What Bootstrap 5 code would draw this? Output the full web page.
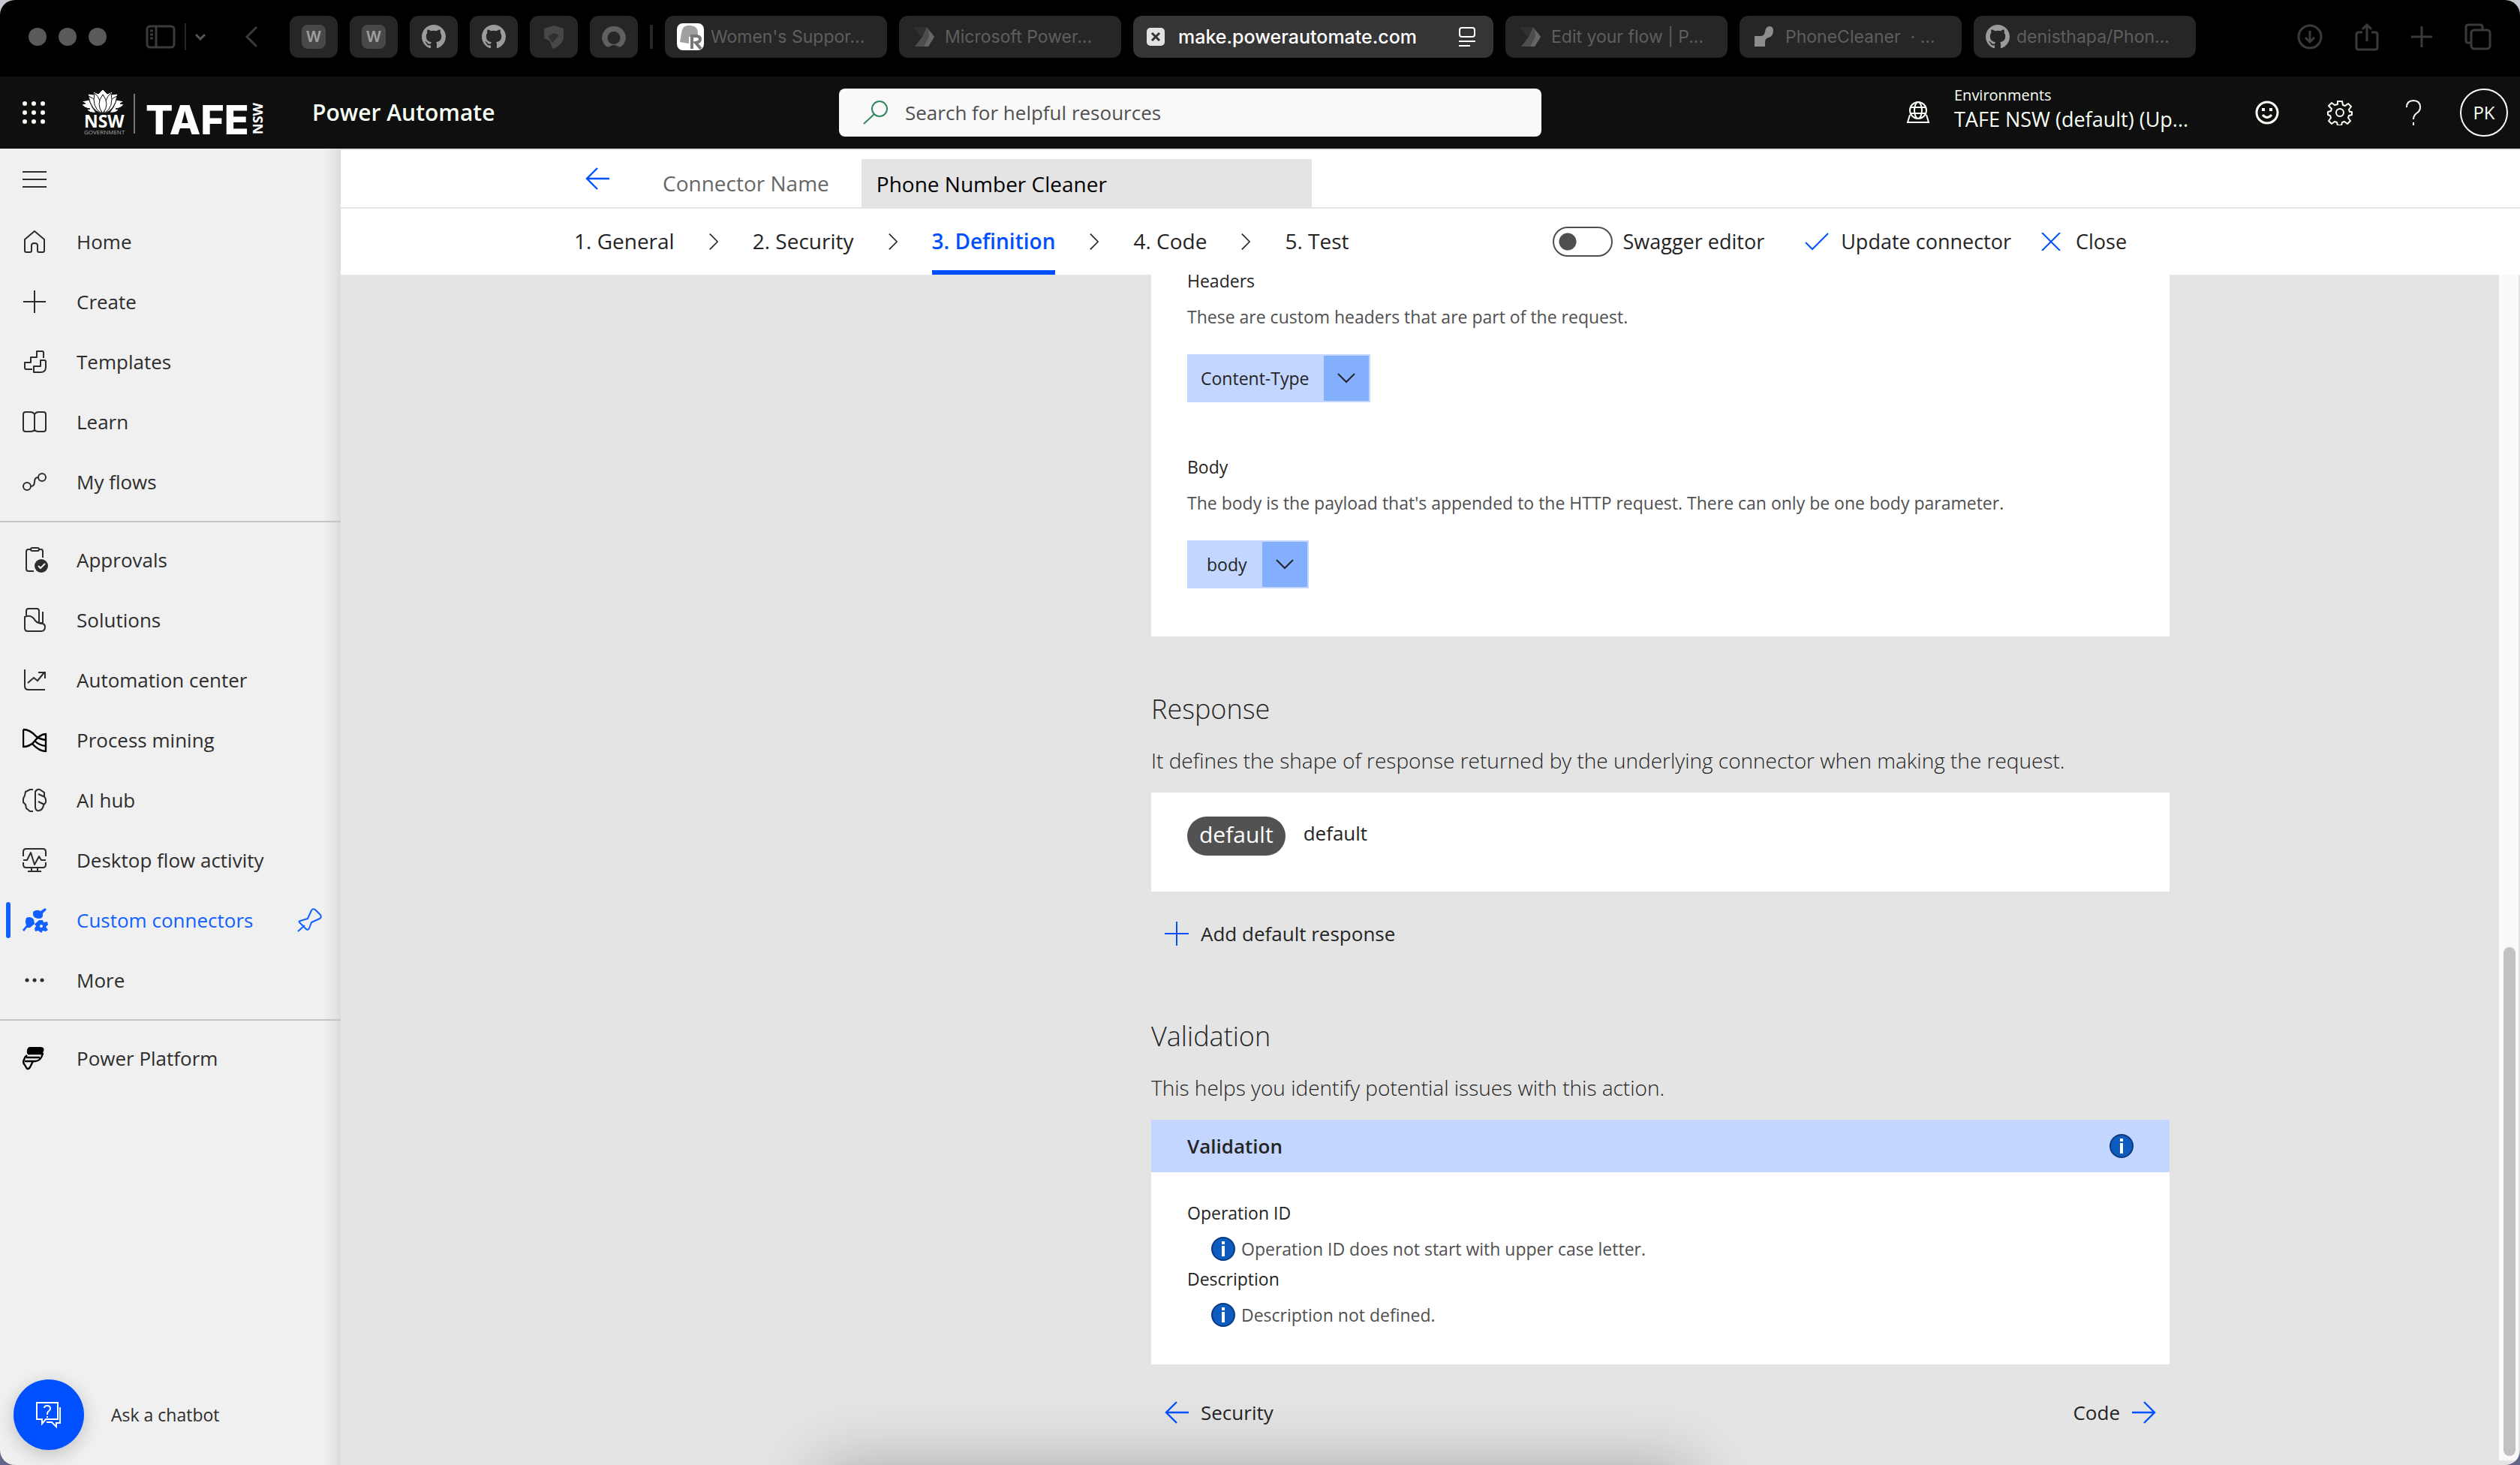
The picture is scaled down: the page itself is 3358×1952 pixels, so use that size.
<!DOCTYPE html>
<html lang="en">
<head>
<meta charset="utf-8">
<meta name="viewport" content="width=device-width, initial-scale=1">
<title>Power Automate - Custom connector</title>
<link href="https://cdn.jsdelivr.net/npm/bootstrap@5.3.0/dist/css/bootstrap.min.css" rel="stylesheet">
<style>
  :root { --blue: #0050ff; --ink: #242424; --soft: #505050; --canvas: #e4e4e4; }
  body { font-family: "Open Sans", "Noto Sans", sans-serif; font-size: 26px; line-height: 40px; color: var(--ink);
         background: linear-gradient(#c6c8d2, #62678a); overflow: hidden; }
  svg { fill: none; stroke: currentColor; stroke-width: 2; flex: none; display: block; }
  svg.solid { stroke: none; fill: currentColor; }
  svg.thick { stroke-width: 3; }
  button { color: inherit; }
  .plain-btn { background: none; border: 0; padding: 0; color: inherit; }
  .window { border-radius: 20px; overflow: hidden; position: relative; }

  /* browser bar */
  .browser-bar { height: 102px; background: #000; color: #3a3a3a; font-family: Inter, sans-serif; font-size: 23px; padding: 0 38px 4px 38px; }
  .dot { width: 24px; height: 24px; border-radius: 50%; background: #5a5a5a; }
  .vline { width: 2px; height: 36px; background: #262626; }
  .vline.wide { width: 4px; height: 32px; }
  .bar-left { width: 348px; }
  .bar-left .panel { margin-left: 52px; }
  .bar-left .vline { margin: 0 12px; }
  .bar-left .prev { margin-left: 52px; }
  .bar-right { gap: 43px; }
  .pin { width: 64px; height: 56px; border-radius: 12px; background: #262626; color: #9b9b9b; display: flex; align-items: center; justify-content: center; }
  .pin b { background: #484848; color: #a0a0a0; width: 32px; height: 32px; line-height: 32px; border-radius: 8px; font-size: 20px; font-weight: 600; text-align: center; }
  .tab { width: 296px; height: 56px; border-radius: 12px; background: #262626; color: #5e5e5e; padding: 0 16px; gap: 9px; }
  .tab.current { width: 480px; background: #353535; color: #fff; font-weight: 500; font-size: 25px; padding: 0 24px 0 18px; gap: 18px; }

  /* product bar */
  .product-bar { height: 96px; background: #0f0f0f; color: #f8fff5; padding: 0 16px 0 30px; }
  .product-name { font-size: 30px; font-weight: 600; color: inherit; margin-left: 62px; }
  .side-block { flex: 0 0 1088px; }
  .logo { margin-left: 48px; }
  .search { width: 936px; height: 64px; background: #f9f9f9; border-radius: 8px; color: #34875f; padding-left: 32px; gap: 20px; }
  .search input { border: 0; background: none; outline: 0; flex: 1; font-size: 26px; color: #424242; }
  .search input::placeholder { color: #505050; opacity: 1; }
  .env { gap: 32px; }
  .env-text { width: 320px; padding-bottom: 10px; margin-right: 81px; }
  .env-label { font-size: 20px; line-height: 28px; }
  .env-value { font-size: 27px; line-height: 36px; white-space: nowrap; }
  .tools { gap: 64px; }
  .tools .help { padding: 0 7px; }
  .who { width: 64px; height: 64px; border: 2px solid; border-radius: 50%; font-size: 24px; margin-left: 45px; }

  /* left navigation */
  .side-nav { flex: 0 0 454px; background: linear-gradient(to left, #dcdcdc, #f0f0f0 22px); color: #2d2d2d; padding-top: 14px; }
  .side-link { height: 80px; padding-left: 30px; gap: 38px; color: inherit; text-decoration: none; position: relative; }
  .side-link svg { width: 34px; height: 34px; }
  .side-link.menu-toggle { height: 70px; width: 100%; }
  .side-link.chosen { color: #1160ff; }
  .side-link.chosen::before { content: ""; position: absolute; left: 8px; top: 16px; width: 6px; height: 48px; border-radius: 3px; background: currentColor; }
  .side-rule { height: 2px; background: #c4c4c4; margin: 12px 0 10px; }
  .chat { padding: 0 0 20px 18px; gap: 36px; font-size: 23px; }
  .chat button { width: 94px; height: 94px; border-radius: 50%; border: 0; background: var(--blue); color: #fff; box-shadow: 0 6px 24px rgba(0,0,0,.2); }

  /* connector bars */
  .name-bar { height: 80px; background: #fff; border-top: 2px solid var(--canvas); border-bottom: 2px solid var(--canvas); padding-left: 326px; }
  .name-bar label { color: #666; font-size: 28px; margin: 0 43px 0 71px; padding-top: 12px; }
  .name-bar input { width: 600px; height: 64px; border: 0; background: var(--canvas); padding: 2px 20px 0; font-size: 28px; color: #000; }
  .step-bar { height: 88px; background: #fff; padding-left: 311px; }
  .steps { gap: 46px; font-size: 28px; }
  .steps a { color: inherit; text-decoration: none; line-height: 86px; height: 88px; }
  .steps a.here { color: var(--blue); font-weight: 600; border-bottom: 6px solid var(--blue); }
  .actions { margin-left: 271px; font-size: 27px; }
  .actions button { margin-left: 54px; }
  .actions button:last-child { margin-left: 40px; gap: 20px; }
  .toggle { appearance: none; width: 80px; height: 40px; border: 2px solid #504f4e; border-radius: 20px; background: radial-gradient(circle at 18px 50%, #504f4e 11px, transparent 12px); margin: 0 14px 0 0; }
  .accent { color: var(--blue); }

  /* definition pane */
  .pane { background: var(--canvas); overflow: hidden; position: relative; }
  .column { width: 47%; max-width: 1357px; margin-left: 1080px; }
  .sheet { background: #fff; padding: 0 48px; }
  .field-name, .field-note { font-size: 23px; line-height: 32px; margin: 0; }
  .field-note { color: var(--soft); margin-top: 16px; }
  .first-sheet { padding-bottom: 64px; }
  .first-sheet .field-name:first-child { margin-top: -8px; }
  .first-sheet .next-field { margin-top: 70px; }
  .split { margin-top: 34px; height: 64px; background: #c2d6ff; border: 2px solid #c2d6ff; border-radius: 0; font-size: 23px; width: max-content; }
  .split .plain-btn { padding: 0 20px 0 16px; }
  .split .opener { width: 60px; background: #84afff; padding: 0; }
  .section-title { font-size: 36px; font-weight: 300; line-height: 48px; margin: 73px 0 24px; }
  .section-title.later { margin-top: 93px; }
  .section-note { font-weight: 300; font-size: 28px; margin: 0 0 23px; }
  .response-sheet { padding-top: 32px; height: 132px; }
  .response-sheet .desc { padding-top: 2px; }
  .pill { background: #525252; color: #fff; border-radius: 26px; height: 52px; line-height: 48px; padding: 0 16px; font-size: 30px; }
  .add { margin: 36px 0 0 18px; }
  .sheet-head { background: #c2d6ff; height: 70px; padding: 0 48px; font-weight: 600; font-size: 26px; }
  .issues { padding-top: 38px; padding-bottom: 50px; }
  .issue { font-size: 23px; line-height: 32px; color: var(--soft); padding-left: 32px; gap: 8px; margin: 16px 0 8px; }
  .pager { margin: 44px 18px 0; }
  .track { position: absolute; right: 2px; top: 0; bottom: 6px; width: 26px; background: #fafafa; }
  .thumb { position: absolute; left: 6px; right: 4px; top: 56.7%; bottom: 6px; border-radius: 8px; background: #c1c1c1; }
  .dock-shade { position: absolute; left: 22%; width: 40%; height: 120px; bottom: -122px; box-shadow: 0 0 90px rgba(0,0,0,.27); }
</style>
</head>
<body>
<svg width="0" height="0" class="position-absolute">
  <symbol id="octocat" viewBox="0 0 16 16"><path fill="currentColor" stroke="none" d="M8 0C3.58 0 0 3.58 0 8c0 3.54 2.29 6.53 5.47 7.59.4.07.55-.17.55-.38 0-.19-.01-.82-.01-1.49-2.01.37-2.53-.49-2.69-.94-.09-.23-.48-.94-.82-1.13-.28-.15-.68-.52-.01-.53.63-.01 1.08.58 1.23.82.72 1.21 1.87.87 2.33.66.07-.52.28-.87.51-1.07-1.78-.2-3.64-.89-3.64-3.95 0-.87.31-1.59.82-2.15-.08-.2-.36-1.02.08-2.12 0 0 .67-.21 2.2.82.64-.18 1.32-.27 2-.27s1.36.09 2 .27c1.53-1.04 2.2-.82 2.2-.82.44 1.1.16 1.92.08 2.12.51.56.82 1.27.82 2.15 0 3.07-1.87 3.75-3.65 3.95.29.25.54.73.54 1.48 0 1.07-.01 1.93-.01 2.2 0 .21.15.46.55.38A8.01 8.01 0 0 0 16 8c0-4.42-3.58-8-8-8z"/></symbol>
  <symbol id="flowmark" viewBox="0 0 30 28"><path stroke="none" fill="#303030" d="M0 1h18l8 13H10z"/><path stroke="none" fill="#4d4d4d" d="M12 14 18 1l10 13-8 13H2z"/><path stroke="none" fill="#666" d="M20 4l8 10-8 13h-6l7-13z"/></symbol>
  <symbol id="info" viewBox="0 0 32 32"><circle cx="16" cy="16" r="15" fill="#0f5cc0" stroke="#0a3a80" stroke-width="2"/><path stroke="#fff" stroke-width="4" d="M16 6v4M16 12v14"/></symbol>
  <symbol id="gt" viewBox="0 0 14 26"><path d="M1 1l12 12L1 25"/></symbol>
  <symbol id="down" viewBox="0 0 24 14"><path d="M1 1l11 11L23 1"/></symbol>
  <symbol id="larrow" viewBox="0 0 32 30"><path stroke-width="2.4" d="M2 15h30M16 1L2 15l14 14"/></symbol>
  <symbol id="rarrow" viewBox="0 0 32 30"><path stroke-width="2.4" d="M0 15h30M16 1l14 14-14 14"/></symbol>
</svg>

<div class="window vh-100 d-flex flex-column">
  <div class="browser-bar d-flex align-items-center flex-shrink-0">
    <div class="bar-left d-flex align-items-center flex-shrink-0">
      <div class="d-flex gap-3"><span class="dot"></span><span class="dot"></span><span class="dot"></span></div>
      <svg class="panel thick" width="40" height="32" viewBox="0 0 40 32"><rect x="2" y="2" width="36" height="28" rx="4"/><path d="M14 2v28M6 8h4M6 13h4M6 18h4"/></svg>
      <span class="vline"></span>
      <svg class="thick" width="14" height="10" viewBox="0 0 14 10" color="#555"><path d="M1 2l6 6 6-6"/></svg>
      <svg class="thick prev" width="18" height="30" viewBox="0 0 18 30"><path d="M16 2L3 15l13 13"/></svg>
    </div>
    <div class="d-flex gap-3">
      <span class="pin"><b>W</b></span><span class="pin"><b>W</b></span>
      <span class="pin"><svg width="32" height="32"><use href="#octocat"/></svg></span>
      <span class="pin"><svg width="32" height="32"><use href="#octocat"/></svg></span>
      <span class="pin"><svg class="solid" width="28" height="32" viewBox="0 0 28 32"><path fill="#474747" d="M1 5L14 1l13 4v12c0 6-6 11-13 15C7 28 1 23 1 17z"/><path fill="#303030" d="M6 15l9-4 6 3-9 10z"/><path fill="#262626" d="M1 18l7 3 4 10C6 27 1 23 1 18z"/></svg></span>
      <span class="pin"><svg class="solid" width="32" height="30" viewBox="0 0 32 30"><path fill="#606060" fill-rule="evenodd" d="M16 1a15 15 0 0 0-11 26q3 3 7 0 4-2 8 0 4 3 7 0A15 15 0 0 0 16 1zm0 7a8 8 0 1 1 0 17 8 8 0 0 1 0-17z"/></svg></span>
    </div>
    <span class="vline wide mx-3"></span>
    <div class="d-flex gap-3">
      <span class="tab d-flex align-items-center"><svg class="solid" width="36" height="36" viewBox="0 0 36 36"><rect width="36" height="36" rx="8" fill="#fff"/><path fill="#a0a0a0" d="M4 25C7 12 5 3 16 3s12 5 12 12v3H16v9z"/><path fill="none" stroke="#777" stroke-width="4" d="M20 34V17h5q6 0 6 4t-6 5l7 8"/></svg><span class="text-truncate">Women's Suppor...</span></span>
      <span class="tab d-flex align-items-center"><svg width="36" height="28"><use href="#flowmark"/></svg><span class="text-truncate">Microsoft Power...</span></span>
      <span class="tab current d-flex align-items-center"><svg class="thick" width="24" height="24" viewBox="0 0 24 24"><rect stroke="none" width="24" height="24" rx="5" fill="#e2e2e2"/><path stroke="#333" d="M7 7l10 10M17 7L7 17"/></svg><span class="me-auto">make.powerautomate.com</span><svg width="22" height="26" viewBox="0 0 22 26"><rect x="1" y="1" width="20" height="12" rx="3"/><path d="M0 19h22M0 25h15"/></svg></span>
      <span class="tab d-flex align-items-center"><svg width="36" height="28"><use href="#flowmark"/></svg><span class="text-truncate">Edit your flow | P...</span></span>
      <span class="tab d-flex align-items-center"><svg class="solid" width="36" height="30" viewBox="0 0 36 30" color="#8d8d8d"><path d="M4 14h8q5 0 6-6Q19 1 24 1t5 6q0 7-6 9-5 1-5 6v6H4z"/></svg><span class="text-truncate">PhoneCleaner &nbsp;· ...</span></span>
      <span class="tab d-flex align-items-center"><svg width="32" height="32" color="#9b9b9b"><use href="#octocat"/></svg><span class="text-truncate">denisthapa/Phon...</span></span>
    </div>
    <div class="bar-right ms-auto d-flex align-items-center">
      <svg class="thick" width="34" height="34" viewBox="0 0 34 34"><circle cx="17" cy="17" r="15"/><path d="M17 9v15M11 18l6 6 6-6"/></svg>
      <svg class="thick" width="32" height="38" viewBox="0 0 32 38"><path d="M10 13H5q-3 0-3 3v17q0 3 3 3h22q3 0 3-3V16q0-3-3-3h-5M16 25V3M10 9l6-6 6 6"/></svg>
      <svg class="thick" width="28" height="28" viewBox="0 0 28 28"><path d="M14 0v28M0 14h28"/></svg>
      <svg class="thick" width="36" height="36" viewBox="0 0 36 36"><path d="M9 26H5q-3 0-3-3V5q0-3 3-3h16q3 0 3 3v4"/><rect x="9" y="9" width="25" height="25" rx="4"/></svg>
    </div>
  </div>

  <header class="product-bar d-flex align-items-center flex-shrink-0">
    <div class="side-block d-flex align-items-center">
      <button class="plain-btn" aria-label="App launcher"><svg class="solid" width="30" height="32" viewBox="0 0 30 32"><g id="r"><circle cx="3" cy="4" r="3"/><circle cx="15" cy="4" r="3"/><circle cx="27" cy="4" r="3"/></g><use href="#r" y="12"/><use href="#r" y="24"/></svg></button>
      <svg class="solid logo" width="246" height="62" viewBox="0 0 246 62" color="#fff">
        <g stroke="#0f0f0f" stroke-width="1"><path d="M1 16l10-2 4 10 5 7q-9 1-12-4l4-1q-8-1-11-6l5-1zM57 16l-10-2-4 10-5 7q9 1 12-4l-4-1q8-1 11-6l-5-1z"/><path d="M9 6l8 1-1-4 7 3 6-6 6 6 7-3-1 4 8-1-4 14-16 12L13 20z"/><path d="M10 9q12 4 17 23Q13 28 10 9zM48 9q-12 4-17 23 14-4 17-23z"/><path d="M18 5q10 8 9 27-13-8-9-27zM40 5q-10 8-9 27 13-8 9-27z"/><path d="M29 7q10 13 0 25-10-12 0-25z"/></g>
        <text x="4" y="51" font-family="Open Sans" font-weight="700" font-size="23">NSW</text>
        <text x="4" y="60" font-family="Open Sans" font-size="8" fill="#aaa">GOVERNMENT</text>
        <path fill="#777" d="M70 6h2v53h-2z"/>
        <text x="86" y="60" font-family="Inter" font-weight="800" font-size="54">TAFE</text>
        <text transform="translate(242 60) rotate(-90)" font-family="Open Sans" font-weight="700" font-size="18">NSW</text>
      </svg>
      <a href="#" class="product-name text-decoration-none">Power Automate</a>
    </div>
    <div class="search d-flex align-items-center">
      <svg width="34" height="32" viewBox="0 0 34 32"><circle cx="22" cy="11" r="10"/><path d="M15 18L1 31"/></svg>
      <input type="search" aria-label="Search" placeholder="Search for helpful resources">
    </div>
    <div class="ms-auto d-flex align-items-center env">
      <svg width="32" height="30" viewBox="0 0 32 30"><circle cx="16" cy="12" r="11"/><ellipse cx="16" cy="12" rx="5" ry="11"/><path d="M6 8h20M6 16h20M5 18l-3 10h28l-3-10"/></svg>
      <div class="env-text"><div class="env-label">Environments</div><div class="env-value">TAFE NSW (default) (Up...</div></div>
    </div>
    <div class="tools d-flex align-items-center">
      <button class="plain-btn" aria-label="Feedback"><svg class="thick" width="32" height="32" viewBox="0 0 32 32"><circle cx="16" cy="16" r="14"/><path d="M10 19q6 7 12 0"/><path stroke-width="4" d="M11 10v4M21 10v4"/></svg></button>
      <button class="plain-btn" aria-label="Settings"><svg width="34" height="34" viewBox="0 0 34 34"><circle cx="17" cy="17" r="5"/><path stroke-linejoin="round" d="M14 2h6l1 5 3 1 4-3 4 4-3 4 1 3 3 0v4l-4 1-1 3 3 4-4 4-4-3-3 1-1 4h-5l-1-4-3-1-4 3-4-4 3-4-1-3-3-1v-4l4-1 1-3-4-4 4-4 4 3 4-1z"/></svg></button>
      <button class="plain-btn help" aria-label="Help"><svg width="20" height="34" viewBox="0 0 20 34"><path d="M1 10q0-9 9-9t9 9q0 5-5 8-4 3-4 8M10 30v4"/></svg></button>
    </div>
    <button class="plain-btn who" aria-label="Account">PK</button>
  </header>

  <div class="d-flex flex-fill" style="min-height:0">
    <nav class="side-nav d-flex flex-column">
      <button class="plain-btn side-link menu-toggle d-flex align-items-center pb-3" aria-label="Collapse menu"><svg viewBox="0 0 34 34"><path d="M0 7h32M0 17h32M0 27h32"/></svg></button>
      <a href="#" class="side-link d-flex align-items-center"><svg viewBox="0 0 34 34"><path stroke-linejoin="round" d="M3 14L16 3l13 11v15q0 2-2 2h-5q-2 0-2-2v-7q0-3-4-3t-4 3v7q0 2-2 2H5q-2 0-2-2z"/></svg>Home</a>
      <a href="#" class="side-link d-flex align-items-center"><svg viewBox="0 0 34 34"><path d="M16 2v30M1 17h30"/></svg>Create</a>
      <a href="#" class="side-link d-flex align-items-center"><svg viewBox="0 0 34 34"><path stroke-linejoin="round" d="M13 27H5q-2 0-2-2v-7h8v-7h8V3h7q2 0 2 2v7M15 31v-8h9v-8h5q2 0 2 2v7q0 7-7 7z"/></svg>Templates</a>
      <a href="#" class="side-link d-flex align-items-center"><svg viewBox="0 0 34 34"><path d="M16 7q-2-3-5-3H4Q1 4 1 7v20q0 3 3 3h7q3 0 5-2 2 2 5 2h7q3 0 3-3V7q0-3-3-3h-7q-3 0-5 3zM16 7v21"/></svg>Learn</a>
      <a href="#" class="side-link d-flex align-items-center"><svg viewBox="0 0 34 34"><circle cx="6" cy="23" r="5"/><circle cx="26" cy="11" r="5"/><path d="M11 23q5 0 5-6t5-6"/></svg>My flows</a>
      <div class="side-rule"></div>
      <a href="#" class="side-link d-flex align-items-center"><svg viewBox="0 0 34 34"><path d="M11 3H8Q5 3 5 6v23q0 3 3 3h7M22 3h3q2 0 2 3v8"/><rect x="11" y="1" width="11" height="4" rx="2"/><circle cx="25" cy="25" r="9" fill="currentColor" stroke="none"/><path stroke="#f0f0f0" d="M21 25l3 3 6-6"/></svg>Approvals</a>
      <a href="#" class="side-link d-flex align-items-center"><svg viewBox="0 0 34 34"><path d="M5 11V5q0-3 3-3h11q3 0 3 3v16M27 6v15M3 13q9-4 14 5 4 4 10 4 3 1 3 4 0 6-5 6H7q-4 0-4-4zM22 21h5"/></svg>Solutions</a>
      <a href="#" class="side-link d-flex align-items-center"><svg viewBox="0 0 34 34"><path d="M3 3v22q0 5 5 5h22M7 21l8-7 5 4L29 7M21 7h9v8"/></svg>Automation center</a>
      <a href="#" class="side-link d-flex align-items-center"><svg color="#000" viewBox="0 0 34 34"><path stroke-width="2.4" stroke-linejoin="round" d="M1 3v23q7 0 13-5 9-12 17-12v23q-9 0-18-10M1 3q9 0 17 9 5 4 13 5M16 18q6 6 15 7"/></svg>Process mining</a>
      <a href="#" class="side-link d-flex align-items-center"><svg viewBox="0 0 34 34"><path d="M14 3H10L4 6 3 11l-2 4v5l3 3 1 5 5 4h4M17 6q2-4 6-3l6 4v5l2 4v4l-3 4q-1 6-6 7-4 1-5-4zM21 9l9 4M21 19l8 4"/></svg>AI hub</a>
      <a href="#" class="side-link d-flex align-items-center"><svg viewBox="0 0 34 34"><path stroke-linejoin="round" d="M1 12V6q0-4 4-4h22q4 0 4 4v6M1 20v3q0 4 4 4h22q4 0 4-4v-3M1 17h5l5-10 5 16 6-11 3 5h6M12 27v5M20 27v5M7 32h18"/></svg>Desktop flow activity</a>
      <a href="#" class="side-link chosen d-flex align-items-center"><svg viewBox="0 0 34 34"><g fill="currentColor" stroke="none"><path d="M14 6q5-4 10-1l6-4 2 2-5 5q1 6-4 7-8 0-9-5zM5 14q6-3 10 2l1 6-6 5H6l-4 5-2-2 5-6q-2-6 0-10z"/><path d="M22 17h5l1 3 5-1 1 4-3 3 3 4-3 2-4-1-2 3-4-3-4 1-1-4 2-3-2-3 4-3z"/></g><circle cx="25" cy="25" r="2" fill="#f0f0f0" stroke="none"/></svg>Custom connectors<svg class="ms-auto me-4" viewBox="0 0 34 34"><path stroke-linejoin="round" d="M1 32l9-8M4 18l10-3 5-11q2-3 5-1l7 7q2 3-1 5l-11 5-3 8q-2 3-4 1L3 20q-1-2 1-2z"/></svg></a>
      <a href="#" class="side-link d-flex align-items-center"><svg viewBox="0 0 34 34"><path stroke-width="5" stroke-linecap="round" d="M6 17h.1M16 17h.1M26 17h.1"/></svg>More</a>
      <div class="side-rule"></div>
      <a href="#" class="side-link d-flex align-items-center"><svg viewBox="9 0 34 34" color="#000"><path fill="currentColor" stroke="none" d="M18 2h15q6 0 4 6-1 3-5 3H15q-1-7 3-9z"/><path stroke-width="2.4" stroke-linejoin="round" d="M16 11h20q-3 10-10 10H12M15 13q-3 2-4 6-2 4 1 7l3 5q2 1 4-2l4-8M14 16h18"/></svg>Power Platform</a>
      <div class="chat d-flex align-items-center mt-auto">
        <button class="d-flex align-items-center justify-content-center" id="chat" aria-label="Chatbot"><svg width="36" height="36" viewBox="0 0 36 36"><path d="M2 2h28v22H14l-5 6v-6H2zM33 8v21h-5v5l-6-6h-7M12 9q0-3 4-3t4 4q0 2-3 4-1 1-1 4M16 20v2"/></svg></button>
        <label for="chat">Ask a chatbot</label>
      </div>
    </nav>

    <main class="d-flex flex-column flex-fill" style="min-width:0">
      <div class="name-bar d-flex align-items-end flex-shrink-0">
        <a href="#" class="accent align-self-center" aria-label="Back"><svg width="32" height="30"><use href="#larrow"/></svg></a>
        <label for="cname" class="align-self-center">Connector Name</label>
        <input id="cname" type="text" value="Phone Number Cleaner">
      </div>
      <div class="step-bar d-flex align-items-center flex-shrink-0">
        <div class="steps d-flex align-items-center">
          <a href="#">1. General</a><svg width="12" height="24"><use href="#gt"/></svg>
          <a href="#">2. Security</a><svg width="12" height="24"><use href="#gt"/></svg>
          <a href="#" class="here">3. Definition</a><svg width="12" height="24"><use href="#gt"/></svg>
          <a href="#">4. Code</a><svg width="12" height="24"><use href="#gt"/></svg>
          <a href="#">5. Test</a>
        </div>
        <div class="d-flex align-items-center actions">
          <input class="toggle" type="checkbox" role="switch" id="swagger"><label for="swagger">Swagger editor</label>
          <button class="plain-btn d-flex align-items-center gap-3"><svg class="accent" width="32" height="24" viewBox="0 0 32 24"><path d="M1 13l9 9L31 1"/></svg>Update connector</button>
          <button class="plain-btn d-flex align-items-center"><svg class="accent" width="26" height="24" viewBox="0 0 26 24"><path d="M1 0l24 24M25 0L1 24"/></svg>Close</button>
        </div>
      </div>
      <div class="pane flex-fill">
        <div class="column">
          <section class="sheet first-sheet">
            <h2 class="field-name">Headers</h2>
            <p class="field-note">These are custom headers that are part of the request.</p>
            <div class="split d-flex"><button class="plain-btn">Content-Type</button><button class="plain-btn opener d-flex align-items-center justify-content-center" aria-label="Content-Type options"><svg width="24" height="14"><use href="#down"/></svg></button></div>
            <h2 class="field-name next-field">Body</h2>
            <p class="field-note">The body is the payload that's appended to the HTTP request. There can only be one body parameter.</p>
            <div class="split d-flex"><button class="plain-btn ps-4">body</button><button class="plain-btn opener d-flex align-items-center justify-content-center" aria-label="body options"><svg width="24" height="14"><use href="#down"/></svg></button></div>
          </section>
          <h1 class="section-title">Response</h1>
          <p class="section-note">It defines the shape of response returned by the underlying connector when making the request.</p>
          <section class="sheet d-flex response-sheet"><span class="pill">default</span><span class="desc ms-4">default</span></section>
          <button class="plain-btn d-flex align-items-center gap-3 add"><svg class="accent" width="32" height="32" viewBox="0 0 32 32"><path d="M16 0v32M0 16h32"/></svg>Add default response</button>
          <h1 class="section-title later">Validation</h1>
          <p class="section-note">This helps you identify potential issues with this action.</p>
          <div class="sheet-head d-flex align-items-center justify-content-between"><span>Validation</span><svg width="32" height="32"><use href="#info"/></svg></div>
          <section class="sheet issues">
            <h2 class="field-name">Operation ID</h2>
            <p class="issue d-flex align-items-center"><svg width="32" height="32"><use href="#info"/></svg>Operation ID does not start with upper case letter.</p>
            <h2 class="field-name">Description</h2>
            <p class="issue d-flex align-items-center mb-0"><svg width="32" height="32"><use href="#info"/></svg>Description not defined.</p>
          </section>
          <div class="d-flex justify-content-between pager">
            <button class="plain-btn d-flex align-items-center gap-3"><svg class="accent" width="32" height="30"><use href="#larrow"/></svg>Security</button>
            <button class="plain-btn d-flex align-items-center gap-3">Code<svg class="accent" width="32" height="30"><use href="#rarrow"/></svg></button>
          </div>
        </div>
        <div class="track"><div class="thumb"></div></div>
        <div class="dock-shade pe-none"></div>
      </div>
    </main>
  </div>
</div>
<script src="https://cdn.jsdelivr.net/npm/bootstrap@5.3.0/dist/js/bootstrap.bundle.min.js"></script>
</body>
</html>
